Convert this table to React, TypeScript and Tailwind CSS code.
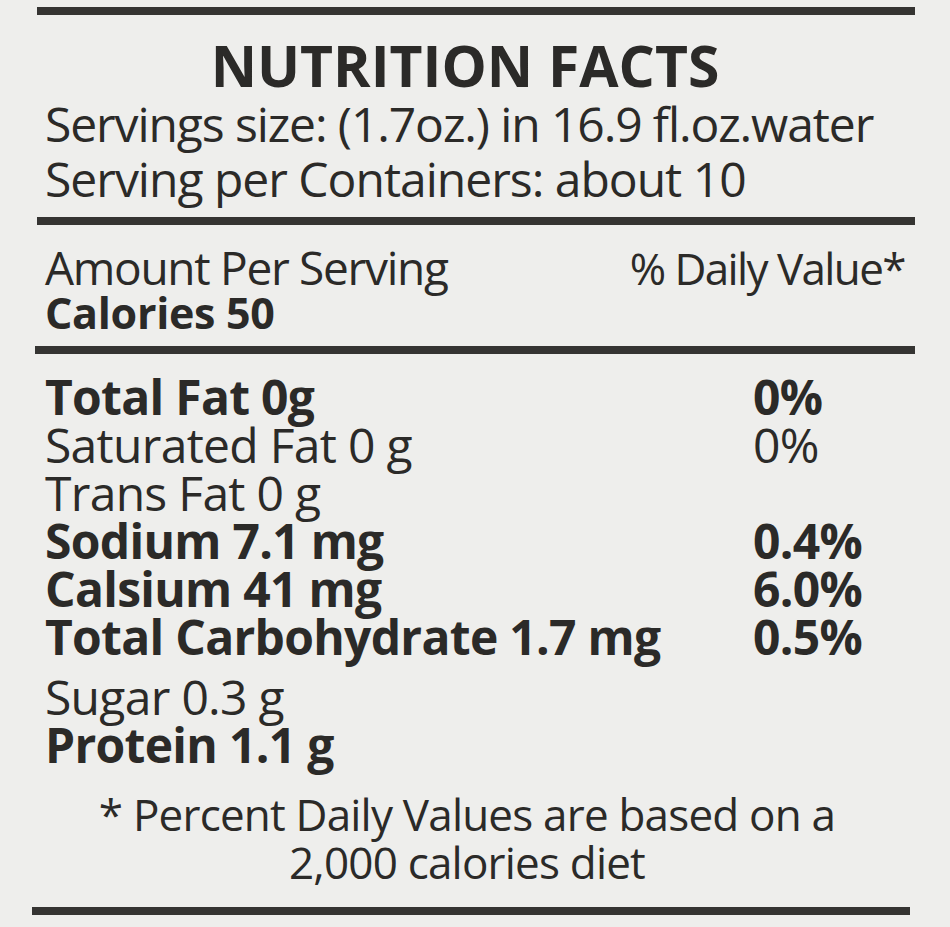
const nutrients = [
  { label: 'Total Fat 0g', value: '0%', bold: true },
  { label: 'Saturated Fat 0 g', value: '0%', bold: false },
  { label: 'Trans Fat 0 g', value: '', bold: false },
  { label: 'Sodium 7.1 mg', value: '0.4%', bold: true },
  { label: 'Calsium 41 mg', value: '6.0%', bold: true },
  { label: 'Total Carbohydrate 1.7 mg', value: '0.5%', bold: true },
]

function Rule({ className = '' }: { className?: string }) {
  return <div className={`h-[8px] bg-[#353432] ${className}`} />
}

function NutrientRow({ label, value, bold }: { label: string; value: string; bold: boolean }) {
  return (
    <div
      className={`grid grid-cols-[708px_1fr] pl-[45px] text-[48px] leading-[48px] tracking-[-0.7px] ${
        bold ? 'font-bold' : 'font-normal'
      }`}
    >
      <span className="whitespace-nowrap">{label}</span>
      <span className="whitespace-nowrap">{value}</span>
    </div>
  )
}

export default function App() {
  return (
    <div className="w-[950px] h-[927px] overflow-hidden bg-[#eeeeec] text-[#2b2a28] font-['Open_Sans',sans-serif] pt-[7px]">
      <Rule className="ml-[37px] w-[878px]" />

      <h1 className="mt-[22px] pr-[20px] text-center text-[57px] leading-[57px] font-bold">NUTRITION FACTS</h1>
      <p className="mt-[6px] pl-[45px] text-[48px] leading-[48px] tracking-[-1.1px] whitespace-nowrap">
        Servings size: (1.7oz.) in 16.9 fl.oz.water
      </p>
      <p className="mt-[7px] pl-[45px] text-[48px] leading-[48px] tracking-[-1px] whitespace-nowrap">
        Serving per Containers: about 10
      </p>

      <Rule className="mt-[14px] ml-[37px] w-[878px]" />

      <div className="mt-[19px] flex items-baseline justify-between pl-[45px] pr-[45px] leading-[46px]">
        <span className="text-[46px] tracking-[-1.3px]">Amount Per Serving</span>
        <span className="text-[44px] tracking-[-1.6px]">% Daily Value*</span>
      </div>
      <p className="mt-[1px] pl-[45px] text-[43px] leading-[42px] font-bold tracking-[-0.3px]">Calories 50</p>

      <Rule className="mt-[12px] ml-[35px] w-[880px]" />

      <div className="mt-[19px]">
        {nutrients.map((n) => (
          <NutrientRow key={n.label} {...n} />
        ))}
        <div className="mt-[12px]">
          <NutrientRow label="Sugar 0.3 g" value="" bold={false} />
          <NutrientRow label="Protein 1.1 g" value="" bold />
        </div>
      </div>

      <div className="mt-[21px] pr-[16px] text-center text-[44px] leading-[48px] tracking-[-0.8px]">
        <p>* Percent Daily Values are based on a</p>
        <p>2,000 calories diet</p>
      </div>

      <Rule className="mt-[21px] ml-[32px] w-[878px]" />
    </div>
  )
}
